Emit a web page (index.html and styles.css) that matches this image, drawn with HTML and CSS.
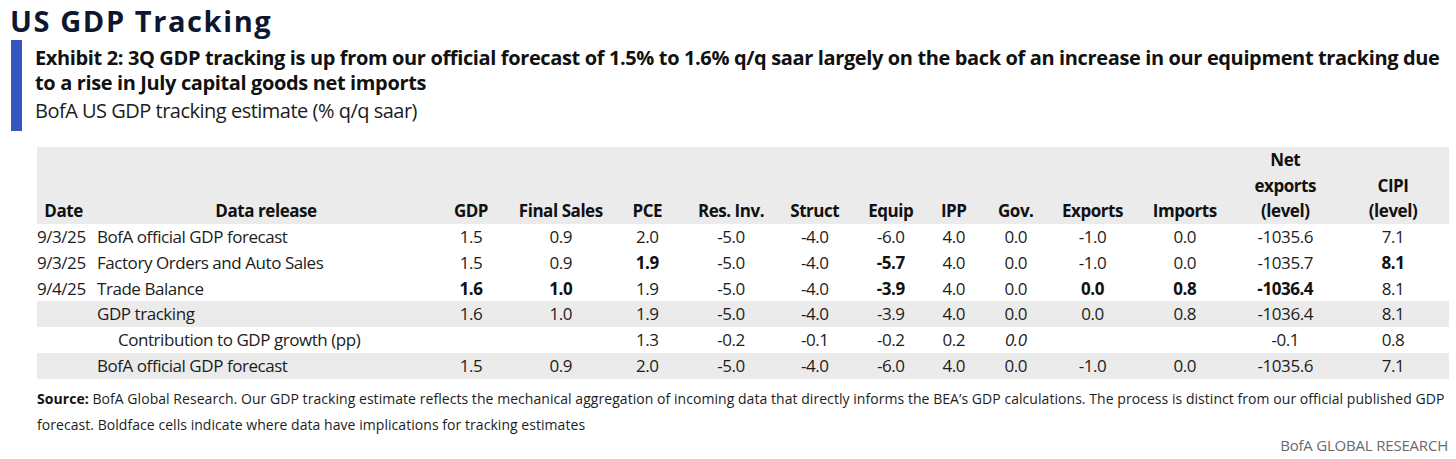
FILE: index.html
```html
<!DOCTYPE html>
<html lang="en">
<head>
<meta charset="utf-8">
<title>US GDP Tracking</title>
<link rel="stylesheet" href="styles.css">
</head>
<body>
<main class="page">
  <h1 class="title">US GDP Tracking</h1>
  <section class="exhibit">
    <h2 class="exhibit-title">Exhibit 2: 3Q GDP tracking is up from our official forecast of 1.5% to 1.6% q/q saar largely on the back of an increase in our equipment tracking due to a rise in July capital goods net imports</h2>
    <p class="exhibit-sub">BofA US GDP tracking estimate (% q/q saar)</p>
  </section>

  <table class="gdp">
    <colgroup>
      <col class="c-date">
      <col class="c-release">
      <col class="c-gdp">
      <col class="c-final">
      <col class="c-pce">
      <col class="c-res">
      <col class="c-struct">
      <col class="c-equip">
      <col class="c-ipp">
      <col class="c-gov">
      <col class="c-exp">
      <col class="c-imp">
      <col class="c-net">
      <col class="c-cipi">
    </colgroup>
    <thead>
      <tr>
        <th>Date</th>
        <th class="release-head">Data release</th>
        <th>GDP</th>
        <th>Final Sales</th>
        <th>PCE</th>
        <th>Res. Inv.</th>
        <th>Struct</th>
        <th>Equip</th>
        <th>IPP</th>
        <th>Gov.</th>
        <th>Exports</th>
        <th>Imports</th>
        <th>Net<br>exports<br>(level)</th>
        <th>CIPI<br>(level)</th>
      </tr>
    </thead>
    <tbody>
      <tr>
        <td class="date">9/3/25</td>
        <td class="release">BofA official GDP forecast</td>
        <td>1.5</td><td>0.9</td><td>2.0</td><td>-5.0</td><td>-4.0</td><td>-6.0</td><td>4.0</td><td>0.0</td><td>-1.0</td><td>0.0</td><td>-1035.6</td><td>7.1</td>
      </tr>
      <tr>
        <td class="date">9/3/25</td>
        <td class="release">Factory Orders and Auto Sales</td>
        <td>1.5</td><td>0.9</td><td class="hit">1.9</td><td>-5.0</td><td>-4.0</td><td class="hit">-5.7</td><td>4.0</td><td>0.0</td><td>-1.0</td><td>0.0</td><td>-1035.7</td><td class="hit">8.1</td>
      </tr>
      <tr>
        <td class="date">9/4/25</td>
        <td class="release">Trade Balance</td>
        <td class="hit">1.6</td><td class="hit">1.0</td><td>1.9</td><td>-5.0</td><td>-4.0</td><td class="hit">-3.9</td><td>4.0</td><td>0.0</td><td class="hit">0.0</td><td class="hit">0.8</td><td class="hit">-1036.4</td><td>8.1</td>
      </tr>
      <tr class="shade">
        <td class="date"></td>
        <td class="release">GDP tracking</td>
        <td>1.6</td><td>1.0</td><td>1.9</td><td>-5.0</td><td>-4.0</td><td>-3.9</td><td>4.0</td><td>0.0</td><td>0.0</td><td>0.8</td><td>-1036.4</td><td>8.1</td>
      </tr>
      <tr>
        <td class="date"></td>
        <td class="release indent">Contribution to GDP growth (pp)</td>
        <td></td><td></td><td>1.3</td><td>-0.2</td><td>-0.1</td><td>-0.2</td><td>0.2</td><td class="ital">0.0</td><td></td><td></td><td>-0.1</td><td>0.8</td>
      </tr>
      <tr class="shade">
        <td class="date"></td>
        <td class="release">BofA official GDP forecast</td>
        <td>1.5</td><td>0.9</td><td>2.0</td><td>-5.0</td><td>-4.0</td><td>-6.0</td><td>4.0</td><td>0.0</td><td>-1.0</td><td>0.0</td><td>-1035.6</td><td>7.1</td>
      </tr>
    </tbody>
  </table>

  <p class="source"><span class="source-label">Source:</span> BofA Global Research. Our GDP tracking estimate reflects the mechanical aggregation of incoming data that directly informs the BEA’s GDP calculations. The process is distinct from our official published GDP forecast. Boldface cells indicate where data have implications for tracking estimates</p>
  <p class="credit">BofA GLOBAL RESEARCH</p>
</main>
</body>
</html>
```
FILE: styles.css
```css
* { box-sizing: border-box; }

html, body {
  margin: 0;
  background: #ffffff;
}

body {
  font-family: "Open Sans", "Liberation Sans", sans-serif;
  color: #1c1c1c;
}

.page {
  padding: 4px 7px 0 10px;
}

.title {
  margin: 0;
  font-size: 29px;
  line-height: 34px;
  font-weight: 700;
  letter-spacing: 1.6px;
  color: #0c1830;
}

.exhibit {
  margin: 2px 0 0 1px;
  border-left: 11px solid #3556c0;
  padding: 5px 0 6px 13px;
}

.exhibit-title {
  margin: 0;
  font-size: 20px;
  line-height: 25px;
  font-weight: 700;
  letter-spacing: -0.37px;
  color: #111111;
}

.exhibit-sub {
  margin: 2px 0 0;
  font-size: 20px;
  line-height: 28px;
  font-weight: 400;
  letter-spacing: -0.5px;
  color: #1c1c1c;
}

.gdp {
  margin: 16px 0 0 27px;
  width: 1412px;
  table-layout: fixed;
  border-collapse: collapse;
  border-spacing: 0;
  font-size: 17px;
  letter-spacing: -0.45px;
  color: #1c1c1c;
}

.c-date { width: 55px; }
.c-release { width: 334px; }
.c-gdp { width: 90px; }
.c-final { width: 89.5px; }
.c-pce { width: 83.5px; }
.c-res { width: 84px; }
.c-struct { width: 83.5px; }
.c-equip { width: 68.5px; }
.c-ipp { width: 57.5px; }
.c-gov { width: 66.5px; }
.c-exp { width: 87px; }
.c-imp { width: 97.5px; }
.c-net { width: 103.5px; }
.c-cipi { width: 112px; }

.gdp thead tr {
  background: #ebebeb;
}

.gdp th {
  padding: 0;
  font-weight: 700;
  line-height: 25.67px;
  text-align: center;
  vertical-align: bottom;
  white-space: nowrap;
  color: #111111;
}

.gdp th:first-child {
  padding-left: 0;
  padding-right: 2px;
}

.gdp th.release-head {
  padding-left: 14px;
}

.gdp td {
  padding: 0;
  height: 25.8px;
  line-height: 25.8px;
  text-align: center;
  white-space: nowrap;
}

.gdp td.date {
  text-align: left;
  padding-left: 0;
}

.gdp td.release {
  text-align: left;
  padding-left: 5px;
}

.gdp td.release.indent {
  padding-left: 26px;
}

.gdp td.hit {
  font-weight: 700;
  color: #111111;
}

.gdp td.ital {
  font-style: italic;
}

.gdp tr.shade {
  background: #ebebeb;
}

.source {
  margin: 7px 0 0 27px;
  font-size: 14px;
  line-height: 26px;
  letter-spacing: 0.05px;
  color: #1c1c1c;
}

.source-label {
  font-weight: 700;
  color: #111111;
}

.credit {
  margin: -1px 0 0;
  text-align: right;
  font-size: 15px;
  line-height: 16px;
  letter-spacing: -0.2px;
  color: #6a6a6a;
  padding-right: 1px;
}
```
